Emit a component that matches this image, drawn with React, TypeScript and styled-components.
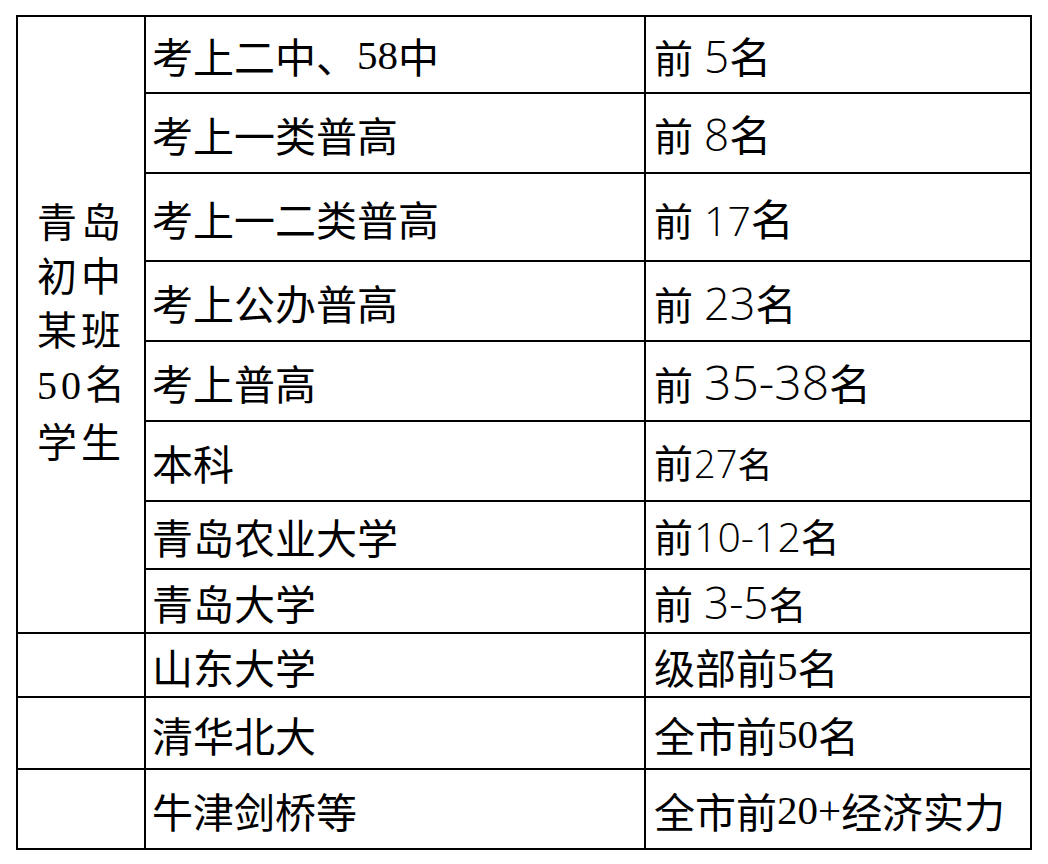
import { Fragment } from 'react';
import styled, { createGlobalStyle } from 'styled-components';

const GlobalStyle = createGlobalStyle`
  html, body {
    margin: 0;
    padding: 0;
    background: #fff;
  }
`;

const SERIF_LATIN = `"Liberation Serif", "DejaVu Serif", serif`;
const SANS_CJK = `"Noto Sans CJK SC", sans-serif`;
const SANS_NUM = `"Open Sans", "Noto Sans", sans-serif`;

const Sheet = styled.div`
  display: grid;
  grid-template-columns: 126px 498px 384px;
  grid-template-rows: 75px 78px 86px 78px 78px 78px 66px 62px 62px 70px 78px;
  gap: 2px;
  padding: 2px;
  margin: 15px 0 0 16px;
  width: fit-content;
  background: #000;
  color: #000;
`;

const Cell = styled.div`
  background: #fff;
  display: flex;
  align-items: center;
  white-space: nowrap;
  overflow: hidden;
  font-family: ${SANS_CJK};
`;

const LabelCell = styled(Cell)`
  grid-row: 1 / span 8;
  justify-content: center;
  padding-top: 10px;
`;

const LabelText = styled.div`
  font-size: 40px;
  line-height: 54px;
  letter-spacing: 4px;
  margin-left: 4px;
`;

const TextCell = styled(Cell)<{ $pad: number }>`
  padding: 2px 0 0 ${p => p.$pad}px;
  font-size: 41px;
  line-height: 1;
`;

const Latin = styled.span`
  font-family: ${SERIF_LATIN};
`;

const RankLine = styled.span`
  display: inline-flex;
  align-items: baseline;
`;

const Pre = styled.span`
  font-size: 39px;
`;

const Num = styled.span<{ $size: number; $gap: boolean }>`
  font-family: ${SANS_NUM};
  font-size: ${p => p.$size}px;
  font-weight: 300;
  margin-left: ${p => (p.$gap ? 11 : 1)}px;
`;

const Unit = styled.span<{ $size: number }>`
  font-size: ${p => p.$size}px;
`;

// digits and "+" are set in a serif face, CJK in the CJK face
function Mixed({ text }: { text: string }) {
  return (
    <>
      {text.split(/([0-9+]+)/).map((part, i) =>
        /^[0-9+]+$/.test(part) ? <Latin key={i}>{part}</Latin> : part
      )}
    </>
  );
}

type Row = {
  name: string;
  rank?: { num: string; gap: boolean; size: number; unit: number };
  plain?: string;
};

const rows: Row[] = [
  { name: '考上二中、58中', rank: { num: '5', gap: true, size: 44, unit: 42 } },
  { name: '考上一类普高', rank: { num: '8', gap: true, size: 44, unit: 42 } },
  { name: '考上一二类普高', rank: { num: '17', gap: true, size: 41, unit: 43 } },
  { name: '考上公办普高', rank: { num: '23', gap: true, size: 45, unit: 41 } },
  { name: '考上普高', rank: { num: '35-38', gap: true, size: 48, unit: 42 } },
  { name: '本科', rank: { num: '27', gap: false, size: 38, unit: 35 } },
  { name: '青岛农业大学', rank: { num: '10-12', gap: false, size: 41, unit: 39 } },
  { name: '青岛大学', rank: { num: '3-5', gap: true, size: 44, unit: 38 } },
  { name: '山东大学', plain: '级部前5名' },
  { name: '清华北大', plain: '全市前50名' },
  { name: '牛津剑桥等', plain: '全市前20+经济实力' },
];

export default function App() {
  return (
    <>
      <GlobalStyle />
      <Sheet>
        {rows.map((row, i) => (
          <Fragment key={i}>
            {i === 0 && (
              <LabelCell>
                <LabelText>
                  青岛<br />初中<br />某班<br /><Latin>50</Latin>名<br />学生
                </LabelText>
              </LabelCell>
            )}
            {i >= 8 && <Cell />}
            <TextCell $pad={6}>
              <Mixed text={row.name} />
            </TextCell>
            <TextCell $pad={8}>
              {row.rank ? (
                <RankLine>
                  <Pre>前</Pre>
                  <Num $size={row.rank.size} $gap={row.rank.gap}>{row.rank.num}</Num>
                  <Unit $size={row.rank.unit}>名</Unit>
                </RankLine>
              ) : (
                <Mixed text={row.plain ?? ''} />
              )}
            </TextCell>
          </Fragment>
        ))}
      </Sheet>
    </>
  );
}
